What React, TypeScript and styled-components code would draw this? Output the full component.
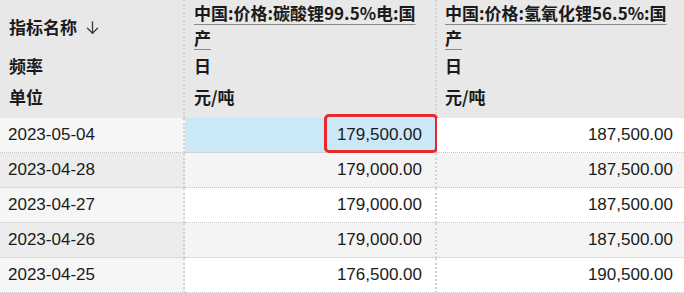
import React from "react";
import styled, { createGlobalStyle } from "styled-components";

const Global = createGlobalStyle`
  html, body { margin: 0; padding: 0; background: #ffffff; }
  body { font-family: "Liberation Sans", Arial, sans-serif; }
`;

const Sheet = styled.div`
  position: relative;
  width: 684px;
  height: 293px;
  overflow: hidden;
  display: grid;
  grid-template-columns: 185px 252px 1fr;
  grid-template-rows: 118px repeat(5, 35px);
`;

const HeadCol = styled.div<{ $last?: boolean }>`
  background: #e8e8e8;
  display: grid;
  grid-template-rows: 52px 28px 38px;
  padding-left: ${(p) => (p.$last ? "8px" : "9px")};
  border-right: ${(p) => (p.$last ? "none" : "2px dotted #d2d2d2")};
  font-family: "Noto Sans CJK SC", "Liberation Sans", sans-serif;
  font-weight: 700;
  font-size: 17px;
  color: #1a1a1a;
  min-width: 0;
`;

const NameSlot = styled.div`
  display: flex;
  align-items: center;
  gap: 9px;
`;

const SortArrow = styled.svg`
  width: 13px;
  height: 13px;
  margin-top: 2px;
  flex: none;
`;

const TitleSlot = styled.div`
  line-height: 25px;
  white-space: nowrap;
`;

const TitleLink = styled.span`
  text-decoration: underline;
  text-decoration-color: #8a8a8a;
  text-decoration-thickness: 1px;
  text-underline-offset: 4px;
`;

const MetaSlot = styled.div<{ $unit?: boolean }>`
  display: flex;
  align-items: ${(p) => (p.$unit ? "flex-start" : "center")};
  padding-top: ${(p) => (p.$unit ? "4px" : "0")};
  line-height: 26px;
`;

const DateCell = styled.div<{ $alt: boolean }>`
  background: ${(p) => (p.$alt ? "#ececec" : "#f6f6f6")};
  border-right: 2px dotted #d2d2d2;
  border-bottom: 1px dotted #c4c4c4;
  display: flex;
  align-items: center;
  padding-left: 8px;
  font-size: 17px;
  color: #1a1a1a;
`;

const ValueCell = styled.div<{ $tone: "sel" | "alt" | "plain"; $last?: boolean }>`
  position: relative;
  background: ${(p) =>
    p.$tone === "sel" ? "#cbe8f6" : p.$tone === "alt" ? "#f4f4f4" : "#ffffff"};
  border-right: ${(p) => (p.$last ? "none" : "2px dotted #d2d2d2")};
  border-bottom: 1px dotted #c4c4c4;
  display: flex;
  align-items: center;
  justify-content: flex-end;
  padding-right: ${(p) => (p.$last ? "11px" : "13px")};
  font-size: 17px;
  color: #1a1a1a;
`;

const Highlight = styled.div`
  position: absolute;
  left: 139px;
  right: -3px;
  top: -4px;
  bottom: -1px;
  border: 3px solid #e8282b;
  border-radius: 5px;
  pointer-events: none;
`;

const rows = [
  { date: "2023-05-04", a: "179,500.00", b: "187,500.00" },
  { date: "2023-04-28", a: "179,000.00", b: "187,500.00" },
  { date: "2023-04-27", a: "179,000.00", b: "187,500.00" },
  { date: "2023-04-26", a: "179,000.00", b: "187,500.00" },
  { date: "2023-04-25", a: "176,500.00", b: "190,500.00" },
];

const columns = [
  { l1: "中国:价格:碳酸锂99.5%电:国", l2: "产" },
  { l1: "中国:价格:氢氧化锂56.5%:国", l2: "产" },
];

export default function App() {
  return (
    <>
      <Global />
      <Sheet>
        <HeadCol>
          <NameSlot>
            <span>指标名称</span>
            <SortArrow viewBox="0 0 13 13" fill="none" stroke="#3a3a3a" strokeWidth="1.3" strokeLinecap="round" strokeLinejoin="round">
              <path d="M6.5 0.8V12.2" />
              <path d="M1.5 7.2L6.5 12.2L11.5 7.2" />
            </SortArrow>
          </NameSlot>
          <MetaSlot>频率</MetaSlot>
          <MetaSlot $unit>单位</MetaSlot>
        </HeadCol>
        {columns.map((c, i) => (
          <HeadCol key={i} $last={i === columns.length - 1}>
            <TitleSlot>
              <TitleLink>{c.l1}</TitleLink>
              <br />
              <TitleLink>{c.l2}</TitleLink>
            </TitleSlot>
            <MetaSlot>日</MetaSlot>
            <MetaSlot $unit>元/吨</MetaSlot>
          </HeadCol>
        ))}
        {rows.map((r, i) => (
          <React.Fragment key={r.date}>
            <DateCell $alt={i % 2 === 1}>{r.date}</DateCell>
            <ValueCell $tone={i === 0 ? "sel" : i % 2 === 1 ? "alt" : "plain"}>
              {r.a}
              {i === 0 && <Highlight />}
            </ValueCell>
            <ValueCell $tone={i % 2 === 1 ? "alt" : "plain"} $last>
              {r.b}
            </ValueCell>
          </React.Fragment>
        ))}
      </Sheet>
    </>
  );
}
